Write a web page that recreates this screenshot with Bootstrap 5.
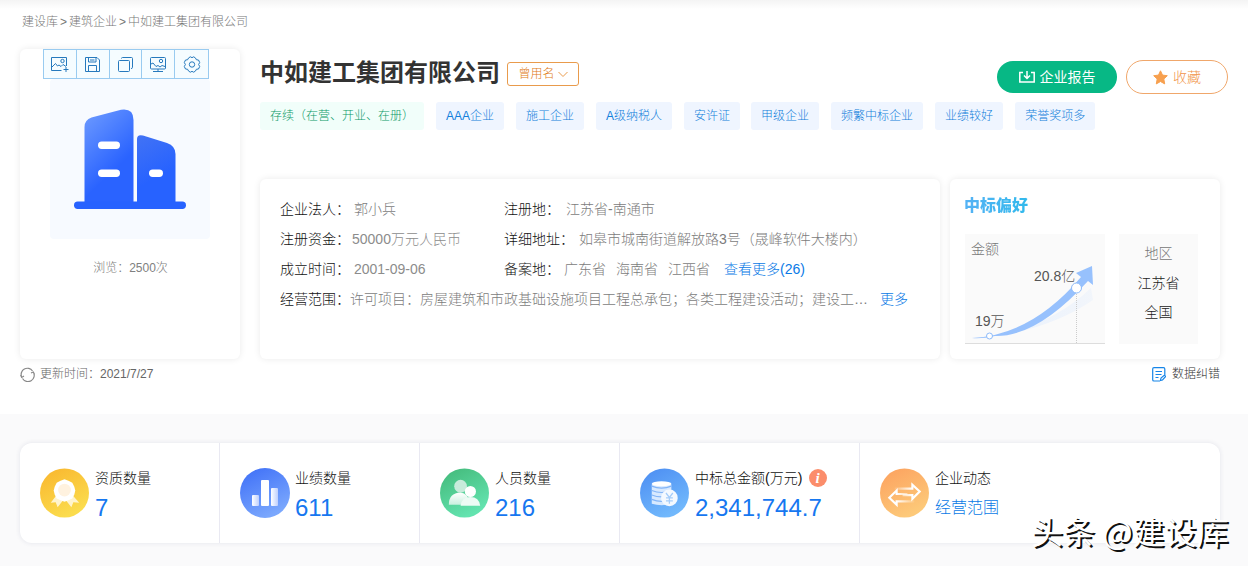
<!DOCTYPE html>
<html lang="zh-CN">
<head>
<meta charset="utf-8">
<meta name="viewport" content="width=device-width, initial-scale=1">
<title>中如建工集团有限公司</title>
<link href="https://cdn.jsdelivr.net/npm/bootstrap@5.3.0/dist/css/bootstrap.min.css" rel="stylesheet">
<script src="https://cdn.jsdelivr.net/npm/bootstrap@5.3.0/dist/js/bootstrap.bundle.min.js" defer></script>
<style>
body{font-family:"Liberation Sans","Noto Sans CJK SC",sans-serif;font-size:14px;line-height:30px;color:#333;font-weight:300;height:566px;overflow:hidden;background:#fff}
a{text-decoration:none;color:#0a7ae6}
svg{display:block;flex:none}
.page-top{height:414px;padding:0 28px 0 20px;background:linear-gradient(#f4f4f4,#fff 9px)}
.crumbs{height:49px;padding:7px 0 0 2px;font-size:12px;color:#777;gap:2px}
.panel{background:#fff;border-radius:6px;box-shadow:0 0 7px rgba(0,0,0,.085)}
.side{width:220px;height:310px}
.tools{width:166px;height:30px;margin-left:23px;border:1px solid #99cbf0;background:#f5fcff}
.tools span{width:33px;border-right:1px solid #99cbf0;display:flex;align-items:center;justify-content:center}
.tools span:last-child{border:0}
.logo-box{width:160px;height:160px;margin-left:30px;background:#f7faff;border-radius:4px;padding:30px 24px}
.views{font-size:12px;color:#808080;margin:14px 0 0 1px}
.detail{width:960px;margin-left:20px}
.headline{height:53px}
.headline h1{font-size:24px;line-height:47px;font-weight:700;color:#333;margin:0}
.old-name{width:72px;height:24px;border:1px solid #e99b4c;border-radius:3px;color:#e07a15;font-size:12px;margin:13px 0 0 7px;gap:3px}
.pill{height:32px;border-radius:17px;gap:5px}
.report{width:120px;background:#07b885;color:#fff;margin-top:12px;font-weight:400}
.fav{width:102px;height:34px;border:1px solid #f0a76b;color:#f19448;margin:11px -8px 0 9px}
.tags{gap:12px;height:77px}
.tags span{height:28px;line-height:28px;padding:0 10px;background:#eff5ff;color:#127fdb;font-size:12px;border-radius:3px;white-space:nowrap}
.tags .ok{background:#f1fefa;color:#0b9a68}
.tags span:nth-child(6){margin-left:-1px}
.info{width:680px;height:180px;padding:15px 20px;white-space:nowrap;color:#7c7c7c}
.info b{font-weight:300;color:#111}
.info .c1{width:224px}
.info .num-text{color:#8c8c8c}
.prefer{width:270px;height:180px;padding:11px 15px 0}
.prefer h2{font-size:16px;line-height:32px;font-weight:900;margin:0 0 12px -1px;background:linear-gradient(90deg,#55b2f5 0,#31b9ec 64px);-webkit-background-clip:text;background-clip:text;color:transparent}
.trend{width:140px;height:110px;background:#fafafa}
.area{width:79px;height:110px;background:#fafafa;padding-top:5px;line-height:29.5px;color:#222}
.foot{height:30px;font-size:12px;color:#666}
.band{background:#fafafb;height:152px;padding:29px 28px 0 20px}
.stats{height:100px;border-radius:12px;background:#fff;box-shadow:0 0 5px rgba(40,50,100,.11)}
.cell{width:200px;padding:20px 0 0 20px;border-right:1px solid #e9e9f2;line-height:30px;gap:6px}
.cell svg.disc{margin-top:5px}
.cell.wide{width:240px}
.cell:last-child{width:360px;border:0}
.cell .num{font-size:24px;font-weight:400;color:#1677f0;line-height:30px}
.cell .txt{font-size:16px;color:#0a7ae6;font-weight:300}
.cell .lbl{color:#111}
.stamp{position:absolute;left:1031px;top:506px;font:400 32px/48px "Noto Sans CJK SC",sans-serif;color:#fff;text-shadow:2px 2px 0 #111;white-space:nowrap}
</style>
</head>
<body>
<main class="page-top">
  <nav class="crumbs d-flex"><span>建设库</span><span>&gt;</span><span>建筑企业</span><span>&gt;</span><span>中如建工集团有限公司</span></nav>
  <div class="d-flex">
    <aside class="side panel">
      <div class="tools d-flex">
        <span><svg width="18" height="16" fill="none" stroke="#2679bd" viewBox="0 0 18 16"><path d="M10.500 14.500H.5V1.500H15.500V10M1 11l3.500-3.500 2 2.500 1.500-1 2 1.500 2-2 3 2M12.500 13.500h5M15 11v5"/><circle cx="11.500" cy="5" r="1.700"/></svg></span>
        <span><svg width="15" height="15" fill="none" stroke="#2679bd" viewBox="0 0 15 15"><path d="M.5.5h11.500l2.500 2.500v11.500H.5zM3.500.5v4.500h7.500v-4.500M5 3h4.500M3.500 14.500V8.500h8v6"/></svg></span>
        <span><svg width="15" height="15" fill="none" stroke="#2679bd" viewBox="0 0 15 15"><rect x=".5" y="3.500" width="11" height="11" rx="1"/><path d="M3.500 1.500q0-1 1-1h9q1 0 1 1v9q0 1-1.500 1"/></svg></span>
        <span><svg width="16" height="15" fill="none" stroke="#2679bd" viewBox="0 0 16 15"><rect x=".5" y=".5" width="15" height="11.500" rx="1"/><path d="M1 7l2-1 3 3.500 2-1 2 1.500 2-1.500 3 1M8 12v2M3 14.500h10"/><circle cx="11" cy="4" r="1.700"/></svg></span>
        <span><svg width="18" height="17" fill="none" stroke="#2679bd" viewBox="0 0 18 17"><path d="M7.300.8Q9 2.500 10.700.8L12.500 2Q12.800 4.500 15.500 4L16.700 6.500Q14.500 8.500 16.700 10.500L15.500 13Q12.800 12.500 12.500 15L10.700 16.200Q9 14.500 7.300 16.200L5.500 15Q5.200 12.500 2.500 13L1.300 10.500Q3.500 8.500 1.300 6.500L2.500 4Q5.200 4.500 5.500 2z"/><circle cx="9" cy="8.500" r="2.700"/></svg></span>
      </div>
      <div class="logo-box">
        <svg width="112" height="101" viewBox="0 0 112 101">
          <defs><linearGradient id="bl" x1="0" y1="0" x2=".5" y2="1"><stop stop-color="#6f9cff"/><stop offset=".75" stop-color="#2a63ff"/></linearGradient><linearGradient id="br" x1="0" y1="0" x2=".3" y2="1"><stop stop-color="#4273f5"/><stop offset=".7" stop-color="#2762ff"/></linearGradient></defs>
          <path fill="url(#bl)" d="M10.500 96V18Q10.500 11 17.500 8.500L47 .8Q59.500-1 59.500 11V96z"/>
          <path fill="url(#br)" d="M63 96V30Q63 25 69 26.500L93 34Q101.500 37 101.500 45V96z"/>
          <rect y="92.500" width="112" height="7.500" rx="3.700" fill="#2762ff"/>
          <g fill="#fff"><rect x="24" y="32.500" width="22" height="7.500" rx="3.700"/><rect x="24" y="60.500" width="22" height="7.500" rx="3.700"/><rect x="75" y="60.500" width="14" height="7.500" rx="3.700"/></g>
        </svg>
      </div>
      <div class="views text-center">浏览：2500次</div>
    </aside>
    <section class="detail">
      <div class="headline d-flex">
        <h1>中如建工集团有限公司</h1>
        <div class="old-name d-flex align-items-center justify-content-center">曾用名<svg width="10" height="7" fill="none" stroke="#e99b4c"><path d="M.5 1L5 5.500 9.500 1"/></svg></div>
        <a href="#" class="pill report ms-auto d-flex align-items-center justify-content-center"><svg width="16" height="12" fill="none" stroke="#fff" stroke-width="1.500"><path d="M4 1.500H.8v9.500h14.400V1.500H12M8 0v7M5 4.500l3 3 3-3"/></svg>企业报告</a>
        <a href="#" class="pill fav d-flex align-items-center justify-content-center"><svg width="15" height="15" viewBox="0 0 15 15" fill="#f7a04f" stroke="#f7a04f"><path d="M7.500.8l2 4.300 4.800.6-3.500 3.300.9 4.900-4.200-2.400-4.200 2.400.9-4.900L.7 5.700l4.800-.6z"/></svg>收藏</a>
      </div>
      <div class="tags d-flex"><span class="ok">存续（在营、开业、在册）</span><span>AAA企业</span><span>施工企业</span><span>A级纳税人</span><span>安许证</span><span>甲级企业</span><span>频繁中标企业</span><span>业绩较好</span><span>荣誉奖项多</span></div>
      <div class="d-flex justify-content-between">
        <div class="info panel">
          <div class="d-flex"><div class="c1"><b>企业法人：</b>&nbsp;郭小兵</div><div class="d-flex"><b>注册地：</b><span style="margin-left:6px">江苏省-南通市</span></div></div>
          <div class="d-flex"><div class="c1"><b>注册资金：</b><span class="num-text" style="margin-left:2px">50000万元人民币</span></div><div class="d-flex"><b>详细地址：</b><span style="margin-left:5px">如皋市城南街道解放路3号（晟峰软件大楼内）</span></div></div>
          <div class="d-flex"><div class="c1"><b>成立时间：</b><span class="num-text">&nbsp;2001-09-06</span></div><div class="d-flex"><b>备案地：</b><span class="ms-1">广东省</span><span style="margin-left:10px">海南省</span><span style="margin-left:10px">江西省</span><a href="#" style="margin-left:14px">查看更多(26)</a></div></div>
          <div class="d-flex"><b>经营范围：</b><span>许可项目：房屋建筑和市政基础设施项目工程总承包；各类工程建设活动；建设工…</span><a href="#" style="margin-left:12px">更多</a></div>
        </div>
        <div class="prefer panel">
          <h2>中标偏好</h2>
          <div class="d-flex" style="gap:14px">
            <svg class="trend" viewBox="0 0 140 110" font-size="14" fill="#555">
              <defs><linearGradient id="sh"><stop stop-color="#eaf2fd"/><stop offset="1" stop-color="#e6effc" stop-opacity=".4"/></linearGradient></defs>
              <path d="M22 103Q85 93 126 54L128 66Q84 96 22 103" fill="url(#sh)"/>
              <path d="M7 104Q67 101 116 43L111 39 127 32 128 51 123 47Q72 103 30 102 17 105 7 104" fill="#97c1fd"/>
              <path d="M0 109.500H140" stroke="#ddd"/><path d="M111.500 58V109" stroke="#ccc" stroke-dasharray="1 1"/>
              <circle cx="111.500" cy="54" r="5" fill="#fff" stroke="#8dbbfa"/><circle cx="24.500" cy="102" r="3" fill="#fff" stroke="#8dbbfa"/>
              <text x="6" y="20" fill="#777">金额</text><text x="69" y="47">20.8亿</text><text x="10" y="92">19万</text>
            </svg>
            <div class="area text-center"><div style="color:#777">地区</div><div>江苏省</div><div>全国</div></div>
          </div>
        </div>
      </div>
    </section>
  </div>
  <div class="foot d-flex justify-content-between">
    <div class="d-flex align-items-center" style="gap:5px"><svg width="15" height="15" fill="none" stroke="#888" stroke-width="1.200" viewBox="0 0 15 15"><path d="M1.700 10A6.200 6.200 0 0 1 12.500 4M13.300 5A6.200 6.200 0 0 1 2.500 11.500M.5 8l1.200 2.400L4 9M11 6l2.300-1 1.200 2.400"/></svg>更新时间：2021/7/27</div>
    <div class="d-flex align-items-center" style="gap:6px;color:#333"><svg width="14" height="15" fill="none" stroke="#1685e8" stroke-width="1.200" viewBox="0 0 14 15"><path d="M8 14H2Q.7 14 .7 12.700V2Q.7.7 2 .7h9.500Q12.800.7 12.800 2V9M3.500 4.500h6.500M3.500 7.500h6M3.500 10.500h3M8.500 13.500l.5-2.500 3.500-3 1.200 1.500-3.200 3.500z"/></svg>数据纠错</div>
  </div>
</main>
<section class="band">
  <div class="stats d-flex">
    <div class="cell d-flex">
      <svg class="disc" width="49" height="50" viewBox="0 0 50 50"><defs><linearGradient id="g1" x1="0" y1="0" x2=".5" y2="1"><stop stop-color="#f9b52d"/><stop offset="1" stop-color="#fbdc4d"/></linearGradient></defs><circle cx="25" cy="25" r="25" fill="url(#g1)"/><path d="M17 27l-6 8 5-.5 2 5 7-9 7 9 2-5 6 .5-7-8z" fill="#fff4cd"/><path d="M25 11l4 1.500 4 2 2 4 1 4-1 4-2 4-4 2-4 1.500-4-1.500-4-2-2-4-1-4 1-4 2-4 4-2z" fill="#fff"/><circle cx="25" cy="22" r="6.500" fill="#fff2df"/></svg>
      <div><div class="lbl">资质数量</div><div class="num">7</div></div>
    </div>
    <div class="cell d-flex">
      <svg class="disc" width="50" height="50"><defs><linearGradient id="g2" x1="0" y1="0" x2=".5" y2="1"><stop stop-color="#3c6df7"/><stop offset="1" stop-color="#7aa7fd"/></linearGradient><linearGradient id="w2"><stop stop-color="#fff"/><stop offset="1" stop-color="#bdcffe"/></linearGradient></defs><circle cx="25" cy="25" r="25" fill="url(#g2)"/><rect x="12" y="27" width="7" height="11" rx="1" fill="url(#w2)"/><rect x="21" y="12" width="8" height="26" rx="1" fill="#fff"/><rect x="31" y="20" width="7" height="18" rx="1" fill="url(#w2)"/></svg>
      <div style="margin-left:-1px"><div class="lbl">业绩数量</div><div class="num">611</div></div>
    </div>
    <div class="cell d-flex">
      <svg class="disc" width="49" height="50" viewBox="0 0 50 50"><defs><linearGradient id="g3" x1="0" y1="0" x2=".5" y2="1"><stop stop-color="#42b878"/><stop offset="1" stop-color="#63e3af"/></linearGradient><linearGradient id="w3" x1="0" y1="0" x2="0" y2="1"><stop stop-color="#fff"/><stop offset="1" stop-color="#c9f0df"/></linearGradient></defs><circle cx="25" cy="25" r="25" fill="url(#g3)"/><circle cx="21" cy="18" r="6.500" fill="#c8ebdb"/><path d="M9 37Q9 25 21 24.500 29 25 30 37z" fill="url(#w3)"/><circle cx="31" cy="23.500" r="5.700" fill="#fff"/><path d="M21 38Q22 29 31 29T41 38z" fill="#edfbf5"/></svg>
      <div><div class="lbl">人员数量</div><div class="num">216</div></div>
    </div>
    <div class="cell wide d-flex">
      <svg class="disc" width="49" height="50" viewBox="0 0 50 50"><defs><linearGradient id="g4" x1="0" y1="0" x2=".5" y2="1"><stop stop-color="#4b8cf2"/><stop offset="1" stop-color="#71b8fc"/></linearGradient></defs><circle cx="25" cy="25" r="25" fill="url(#g4)"/><path d="M12 16V36Q22 39 32 36V16z" fill="#d7e9ff"/><path d="M12 18q10 4 20 0M12 22.500q10 4 20 0M12 27q10 4 20 0M12 31.500q10 4 20 0" fill="none" stroke="#82b4f7" stroke-width="1.200"/><ellipse cx="22" cy="15.500" rx="10" ry="2.500" fill="#fff"/><circle cx="30" cy="30" r="8.500" fill="#f4f9ff"/><path d="M26.500 25l3.500 4.500 3.500-4.500M30 29.500V36M26.500 30h7M26.500 33h7" fill="none" stroke="#a5cdfa" stroke-width="1.300"/></svg>
      <div><div class="lbl d-flex align-items-center text-nowrap" style="gap:7px">中标总金额(万元)<svg width="18" height="18"><circle cx="9" cy="9" r="9" fill="#fb8d6b"/><text x="6.500" y="14" font-family="Liberation Serif" font-size="15" font-style="italic" font-weight="700" fill="#fff">i</text></svg></div><div class="num">2,341,744.7</div></div>
    </div>
    <div class="cell d-flex">
      <svg class="disc" width="49" height="50" viewBox="0 0 50 50"><defs><linearGradient id="g5" x1="0" y1="0" x2=".5" y2="1"><stop stop-color="#fca05e"/><stop offset="1" stop-color="#fdc979"/></linearGradient><linearGradient id="w5" gradientUnits="userSpaceOnUse" x1="15" y1="0" x2="33" y2="0"><stop stop-color="#fff" stop-opacity=".1"/><stop offset="1" stop-color="#fff"/></linearGradient><linearGradient id="v5" gradientUnits="userSpaceOnUse" x1="17" y1="0" x2="35" y2="0"><stop stop-color="#fff"/><stop offset="1" stop-color="#fff" stop-opacity=".1"/></linearGradient></defs><circle cx="25" cy="25" r="25" fill="url(#g5)"/><g fill="none" stroke-width="2.200"><path d="M15 20.500H33V16.500L40.500 23.500 33 31V27.200H23" stroke="url(#w5)"/><path d="M28 26H17V22.500L9.500 29.800 17 37V33.500H35" stroke="url(#v5)"/></g></svg>
      <div><div class="lbl">企业动态</div><a class="txt" href="#">经营范围</a></div>
    </div>
  </div>
</section>
<div class="stamp">头条 @建设库</div>
</body>
</html>
